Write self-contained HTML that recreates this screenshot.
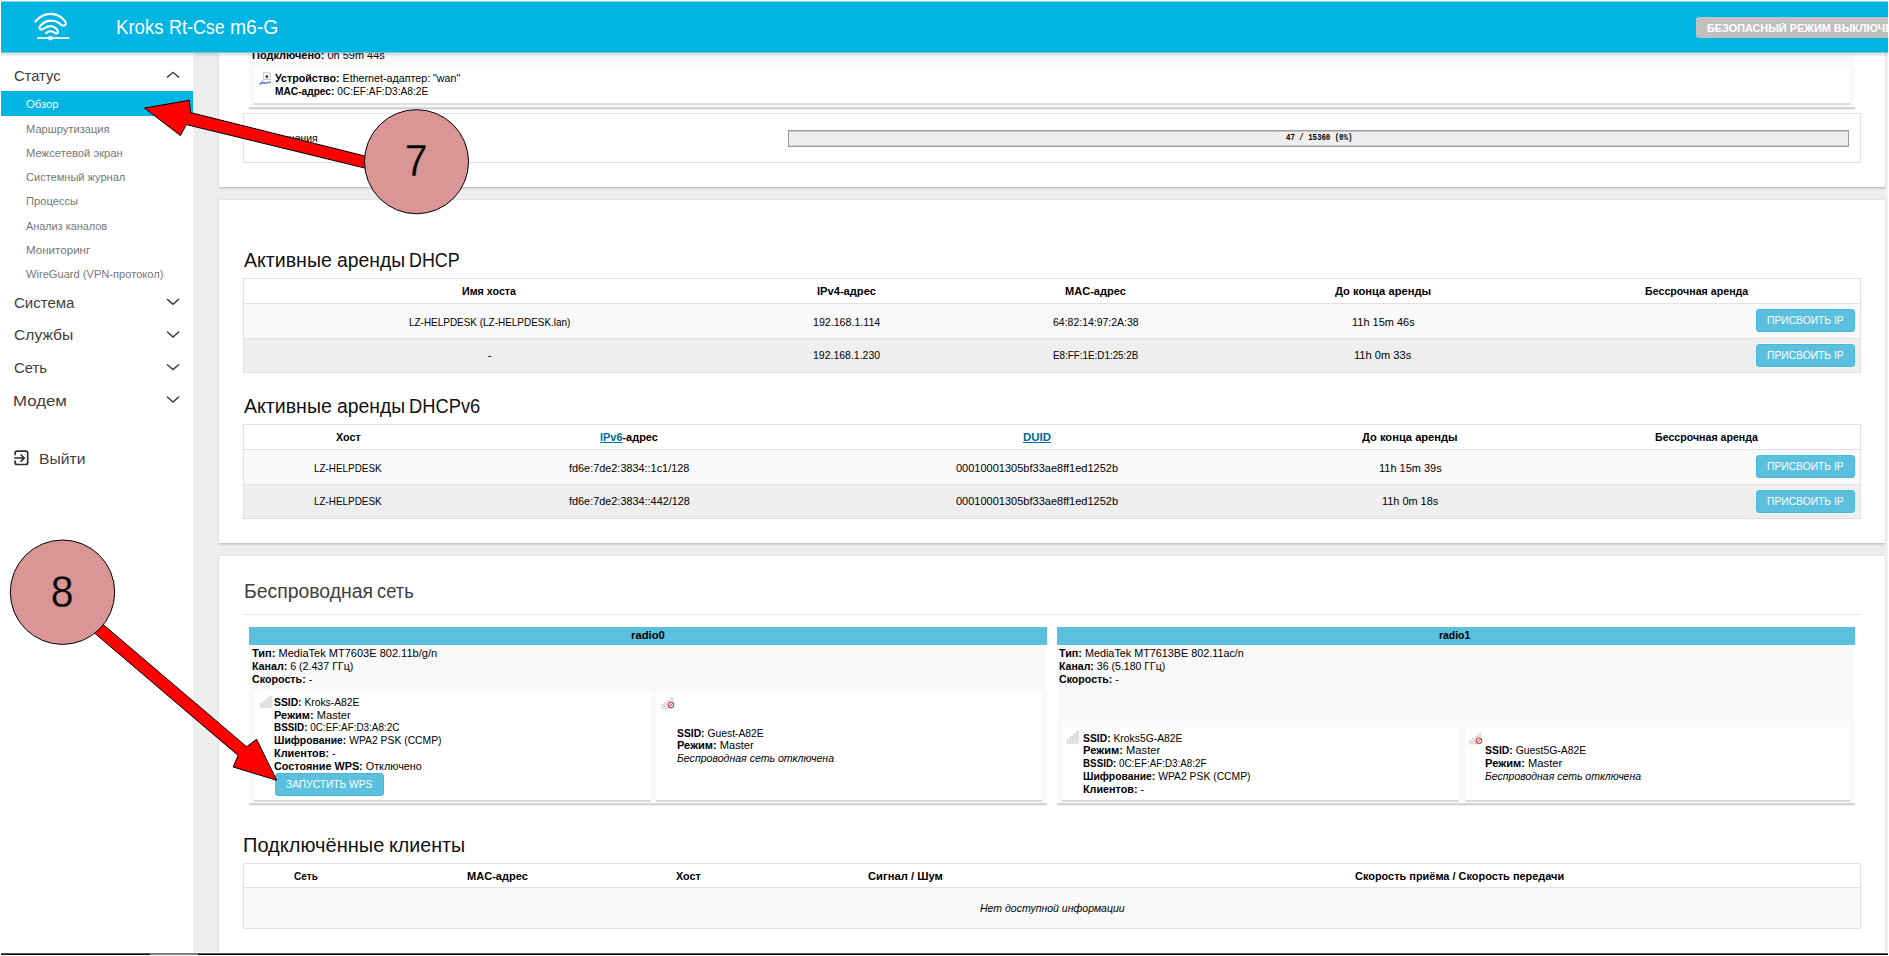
<!DOCTYPE html>
<html lang="ru">
<head>
<meta charset="utf-8">
<title>Kroks Rt-Cse m6-G</title>
<style>
html,body{margin:0;padding:0}
html{width:1889px;height:956px;overflow:hidden;background:#fff}
body{position:relative;width:1889px;height:956px;overflow:hidden;background:#fff;font-family:"Liberation Sans",sans-serif;color:#000}
.b{position:absolute;box-sizing:border-box}
.t{position:absolute;white-space:nowrap;line-height:1;transform-origin:0 0;color:#000}
.t a{color:#0069a0;text-decoration:underline}
svg{position:absolute;overflow:visible}
#hdr{position:absolute;left:1px;top:1px;width:1887px;height:51px;background:#00b5e2;box-shadow:inset 0 1px 0 #7fd9f0,inset 0 2px 0 #00ade0;z-index:5;overflow:hidden}
#hsh{position:absolute;left:1px;top:52px;width:1887px;height:5px;z-index:5;background:linear-gradient(to bottom,#6ec3dc 0,#6ec3dc 1px,rgba(40,0,0,.10) 1px,rgba(40,0,0,.10) 2px,rgba(0,0,0,.11) 2px,rgba(0,0,0,.11) 3px,rgba(0,0,0,.06) 3px,rgba(0,0,0,.06) 4px,rgba(0,0,0,.025) 4px,rgba(0,0,0,.025) 5px)}
#safe{position:absolute;left:1695px;top:16px;width:260px;height:21px;border-radius:3px;background:#c0c0c0}
#ann{left:0;top:0;z-index:20}
</style>
</head>
<body>
<div id="hdr"><div id="safe"></div></div>
<div id="hsh"></div>
<div class="b" style="left:1px;top:52px;width:192px;height:900px;background:#fff"></div>
<div class="b" style="left:193px;top:52px;width:1695px;height:900px;background:#ededed"></div>
<div class="b" style="left:1886px;top:52px;width:2px;height:900px;background:#f2f2f2"></div>
<div class="b" style="left:1px;top:91px;width:192px;height:25px;background:#00b5e2"></div>
<div class="b" style="left:219px;top:40px;width:1666px;height:147px;background:#fff;box-shadow:0 1px 0 #c9c9c9,0 2px 0 #d6d6d6,0 3px 0 #e9e9e9,0 0 0 1px #e3e3e3"></div>
<div class="b" style="left:249px;top:40px;width:1606px;height:67px;background:#f9f9f9;box-shadow:0 1px 0 #d8d8d8,0 2px 0 #d0d0d0,0 3px 0 #f0f0f0"></div>
<div class="b" style="left:254px;top:67px;width:1596px;height:36px;background:#fff;box-shadow:0 1px 0 #dbdbdb,0 2px 0 #dfdfdf"></div>
<div class="b" style="left:243px;top:113px;width:1618px;height:50px;background:#fff;border:1px solid #e2e2e2"></div>
<div class="b" style="left:788px;top:130px;width:1061px;height:17px;background:#eee;border:1px solid #9c9c9c;box-shadow:inset 0 1px 0 #c4c4c4,inset 0 -1px 0 #cfcfcf"></div>
<div class="b" style="left:219px;top:200px;width:1666px;height:343px;background:#fff;box-shadow:0 1px 0 #c9c9c9,0 2px 0 #d6d6d6,0 3px 0 #e9e9e9,0 0 0 1px #e3e3e3"></div>
<div class="b" style="left:243px;top:278px;width:1618px;height:95px;background:#fff;border:1px solid #e2e2e2"></div>
<div class="b" style="left:244px;top:303px;width:1616px;height:35px;background:#f9f9f9;border-top:1px solid #e2e2e2"></div>
<div class="b" style="left:244px;top:338px;width:1616px;height:34px;background:#eee;border-top:1px solid #e2e2e2"></div>
<div class="b" style="left:243px;top:424px;width:1618px;height:95px;background:#fff;border:1px solid #e2e2e2"></div>
<div class="b" style="left:244px;top:449px;width:1616px;height:35px;background:#f9f9f9;border-top:1px solid #e2e2e2"></div>
<div class="b" style="left:244px;top:484px;width:1616px;height:34px;background:#eee;border-top:1px solid #e2e2e2"></div>
<div class="b" style="left:1756.2px;top:309.3px;width:98.8px;height:22.6px;background:#5bc0de;border-radius:3px;border:1px solid #46b8da;box-shadow:0 0 0 1px rgba(255,255,255,.55)"></div>
<div class="b" style="left:1756.2px;top:344.1px;width:98.8px;height:22.6px;background:#5bc0de;border-radius:3px;border:1px solid #46b8da;box-shadow:0 0 0 1px rgba(255,255,255,.55)"></div>
<div class="b" style="left:1756.2px;top:454.9px;width:98.8px;height:23.1px;background:#5bc0de;border-radius:3px;border:1px solid #46b8da;box-shadow:0 0 0 1px rgba(255,255,255,.55)"></div>
<div class="b" style="left:1756.2px;top:490px;width:98.8px;height:22.8px;background:#5bc0de;border-radius:3px;border:1px solid #46b8da;box-shadow:0 0 0 1px rgba(255,255,255,.55)"></div>
<div class="b" style="left:219px;top:556px;width:1666px;height:396px;background:#fff;box-shadow:0 1px 0 #c9c9c9,0 2px 0 #d6d6d6,0 3px 0 #e9e9e9,0 0 0 1px #e3e3e3"></div>
<div class="b" style="left:243px;top:614px;width:1618px;height:1px;background:#e9e9e9"></div>
<div class="b" style="left:249px;top:627px;width:798px;height:176px;background:#f9f9f9;box-shadow:0 1px 0 #d8d8d8,0 2px 0 #d0d0d0,0 3px 0 #f0f0f0"></div>
<div class="b" style="left:249px;top:627px;width:798px;height:18px;background:#5bc0de"></div>
<div class="b" style="left:254px;top:691px;width:397px;height:109px;background:#fff;box-shadow:0 1px 0 #dbdbdb,0 2px 0 #dfdfdf"></div>
<div class="b" style="left:656px;top:691px;width:386px;height:109px;background:#fff;box-shadow:0 1px 0 #dbdbdb,0 2px 0 #dfdfdf"></div>
<div class="b" style="left:275px;top:773px;width:108.5px;height:22.5px;background:#5bc0de;border-radius:3px;border:1px solid #46b8da;box-shadow:0 0 0 1px rgba(255,255,255,.55)"></div>
<div class="b" style="left:1057px;top:627px;width:798px;height:176px;background:#f9f9f9;box-shadow:0 1px 0 #d8d8d8,0 2px 0 #d0d0d0,0 3px 0 #f0f0f0"></div>
<div class="b" style="left:1057px;top:627px;width:798px;height:18px;background:#5bc0de"></div>
<div class="b" style="left:1062px;top:727px;width:397px;height:73px;background:#fff;box-shadow:0 1px 0 #dbdbdb,0 2px 0 #dfdfdf"></div>
<div class="b" style="left:1465px;top:727px;width:385px;height:73px;background:#fff;box-shadow:0 1px 0 #dbdbdb,0 2px 0 #dfdfdf"></div>
<div class="b" style="left:243px;top:863px;width:1618px;height:66px;background:#fff;border:1px solid #e2e2e2"></div>
<div class="b" style="left:244px;top:887px;width:1616px;height:41px;background:#f9f9f9;border-top:1px solid #e2e2e2"></div>
<svg class="b" width="1889" height="956" viewBox="0 0 1889 956" style="left:0;top:0;z-index:3"><polyline points="167.4,77.1 173,72.3 178.6,77.1" fill="none" stroke="#3a3a3a" stroke-width="1.4" stroke-linecap="round" stroke-linejoin="miter"/><polyline points="167.4,299.4 173,304.3 178.6,299.4" fill="none" stroke="#3a3a3a" stroke-width="1.4" stroke-linecap="round" stroke-linejoin="miter"/><polyline points="167.4,332 173,337.1 178.6,332" fill="none" stroke="#3a3a3a" stroke-width="1.4" stroke-linecap="round" stroke-linejoin="miter"/><polyline points="167.4,364.7 173,369.6 178.6,364.7" fill="none" stroke="#3a3a3a" stroke-width="1.4" stroke-linecap="round" stroke-linejoin="miter"/><polyline points="167.4,396.9 173,402 178.6,396.9" fill="none" stroke="#3a3a3a" stroke-width="1.4" stroke-linecap="round" stroke-linejoin="miter"/><path d="M15.1 455.3 V453.1 a2 2 0 0 1 2 -2 H25.7 a2 2 0 0 1 2 2 V462.5 a2 2 0 0 1 -2 2 H17.1 a2 2 0 0 1 -2 -2 V460.5" fill="none" stroke="#303030" stroke-width="1.7"/><path d="M14.2 458 H23.6 M20.6 454.5 L24.2 458 L20.6 461.6" fill="none" stroke="#303030" stroke-width="1.7"/><rect x="263.4" y="72.7" width="6.9" height="6.8" fill="#fcfcfc" stroke="#c9c9c9" stroke-width="1"/><circle cx="266.8" cy="76.4" r="1.5" fill="#4a4a30"/><path d="M261.6 81 L265.2 79" fill="none" stroke="#cfcfcf" stroke-width="1.6"/><path d="M260.2 84 C262 81.2 263.6 83.6 265.6 83 C267.4 82.4 268.6 82.6 270.2 82.2" fill="none" stroke="#5a86c8" stroke-width="1.7" stroke-linecap="round"/><rect x="260.1" y="703.3" width="2.5" height="4.4" fill="#e6e6e4" stroke="#cdcdcb" stroke-width="0.5"/><rect x="263.1" y="700.9" width="2.5" height="6.8" fill="#e6e6e4" stroke="#cdcdcb" stroke-width="0.5"/><rect x="266.1" y="698.3" width="2.5" height="9.4" fill="#e6e6e4" stroke="#cdcdcb" stroke-width="0.5"/><rect x="269.1" y="696" width="2.5" height="11.7" fill="#e6e6e4" stroke="#cdcdcb" stroke-width="0.5"/><rect x="1067.3" y="738.8" width="2.5" height="4.4" fill="#e6e6e4" stroke="#cdcdcb" stroke-width="0.5"/><rect x="1070.3" y="736.4" width="2.5" height="6.8" fill="#e6e6e4" stroke="#cdcdcb" stroke-width="0.5"/><rect x="1073.3" y="733.8" width="2.5" height="9.4" fill="#e6e6e4" stroke="#cdcdcb" stroke-width="0.5"/><rect x="1076.3" y="731.5" width="2.5" height="11.7" fill="#e6e6e4" stroke="#cdcdcb" stroke-width="0.5"/><rect x="661.6" y="704.7" width="2.5" height="3.6" fill="#e6e6e4" stroke="#cdcdcb" stroke-width="0.5"/><rect x="664.6" y="702.7" width="2.5" height="5.6" fill="#e6e6e4" stroke="#cdcdcb" stroke-width="0.5"/><rect x="667.6" y="700.3" width="2.5" height="8" fill="#e6e6e4" stroke="#cdcdcb" stroke-width="0.5"/><rect x="670.6" y="697.9" width="2.5" height="10.4" fill="#e6e6e4" stroke="#cdcdcb" stroke-width="0.5"/><circle cx="671" cy="705" r="2.7" fill="#fff" fill-opacity="0.6" stroke="#d2484d" stroke-width="1.05"/><line x1="669.2" y1="706.6" x2="672.8" y2="703.4" stroke="#d2484d" stroke-width="1"/><rect x="1469.6" y="740.4" width="2.5" height="3.6" fill="#e6e6e4" stroke="#cdcdcb" stroke-width="0.5"/><rect x="1472.6" y="738.4" width="2.5" height="5.6" fill="#e6e6e4" stroke="#cdcdcb" stroke-width="0.5"/><rect x="1475.6" y="736" width="2.5" height="8" fill="#e6e6e4" stroke="#cdcdcb" stroke-width="0.5"/><rect x="1478.6" y="733.6" width="2.5" height="10.4" fill="#e6e6e4" stroke="#cdcdcb" stroke-width="0.5"/><circle cx="1479" cy="740.7" r="2.7" fill="#fff" fill-opacity="0.6" stroke="#d2484d" stroke-width="1.05"/><line x1="1477.2" y1="742.3" x2="1480.8" y2="739.1" stroke="#d2484d" stroke-width="1"/></svg>
<span class="t" id="t0" style="left:13.75px;top:68px;font-size:15.5px;color:#404040;transform:scaleX(0.9487)">Статус</span>
<span class="t" id="t1" style="left:25.95px;top:98px;font-size:11.6px;color:#fff;transform:scaleX(0.9696)">Обзор</span>
<span class="t" id="t2" style="left:25.95px;top:123px;font-size:11.6px;color:#767676;transform:scaleX(0.9596)">Маршрутизация</span>
<span class="t" id="t3" style="left:25.95px;top:147px;font-size:11.6px;color:#767676;transform:scaleX(0.9696)">Межсетевой экран</span>
<span class="t" id="t4" style="left:25.95px;top:171px;font-size:11.6px;color:#767676;transform:scaleX(0.9517)">Системный журнал</span>
<span class="t" id="t5" style="left:25.95px;top:195px;font-size:11.6px;color:#767676;transform:scaleX(0.9628)">Процессы</span>
<span class="t" id="t6" style="left:25.95px;top:220px;font-size:11.6px;color:#767676;transform:scaleX(0.9364)">Анализ каналов</span>
<span class="t" id="t7" style="left:25.95px;top:244px;font-size:11.6px;color:#767676">Мониторинг</span>
<span class="t" id="t8" style="left:25.95px;top:268px;font-size:11.6px;color:#767676;transform:scaleX(0.9582)">WireGuard (VPN-протокол)</span>
<span class="t" id="t9" style="left:13.75px;top:295px;font-size:15.5px;color:#404040;transform:scaleX(0.9681)">Система</span>
<span class="t" id="t10" style="left:13.75px;top:327px;font-size:15.5px;color:#404040;transform:scaleX(1.0089)">Службы</span>
<span class="t" id="t11" style="left:13.75px;top:360px;font-size:15.5px;color:#404040;transform:scaleX(0.9556)">Сеть</span>
<span class="t" id="t12" style="left:12.75px;top:393px;font-size:15.5px;color:#404040;transform:scaleX(1.0844)">Модем</span>
<span class="t" id="t13" style="left:38.75px;top:451px;font-size:15.5px;color:#404040;transform:scaleX(1.0118)">Выйти</span>
<span class="t" id="t14" style="left:115.75px;top:17px;font-size:20.2px;color:#fff;z-index:6;transform:scaleX(0.9207)">Kroks</span>
<span class="t" id="t15" style="left:168.75px;top:17px;font-size:20.2px;color:#fff;z-index:6;transform:scaleX(0.8879)">Rt-Cse</span>
<span class="t" id="t16" style="left:229.55px;top:17px;font-size:20.2px;color:#fff;z-index:6;transform:scaleX(0.9587)">m6-G</span>
<span class="t" id="t17" style="left:1706.75px;top:23px;font-size:10.6px;color:#fff;font-weight:bold;z-index:6;overflow:hidden;width:176.83px;transform:scaleX(1.0250)">БЕЗОПАСНЫЙ РЕЖИМ ВЫКЛЮЧЕН</span>
<span class="t" id="t18" style="left:251.55px;top:49px;font-size:11.6px;transform:scaleX(0.9463)"><b>Подключено:</b> 0h 59m 44s</span>
<span class="t" id="t19" style="left:274.75px;top:72px;font-size:11.6px;transform:scaleX(0.9227)"><b>Устройство:</b> Ethernet-адаптер: "wan"</span>
<span class="t" id="t20" style="left:274.75px;top:85px;font-size:11.6px;transform:scaleX(0.8768)"><b>MAC-адрес:</b> 0C:EF:AF:D3:A8:2E</span>
<span class="t" id="t21" style="left:257.75px;top:132px;font-size:11.6px;transform:scaleX(0.9009)">Соединения</span>
<span class="t" id="t22" style="left:1285.55px;top:134px;font-size:8.5px;font-weight:bold;font-family:'Liberation Mono', monospace;transform:scaleX(0.8677)">47 / 15360 (0%)</span>
<span class="t" id="t23" style="left:243.95px;top:251px;font-size:19.9px;color:#111;transform:scaleX(0.9831)">Активные</span>
<span class="t" id="t24" style="left:336.75px;top:251px;font-size:19.9px;color:#111;transform:scaleX(0.9709)">аренды</span>
<span class="t" id="t25" style="left:408.95px;top:251px;font-size:19.9px;color:#111;transform:scaleX(0.8992)">DHCP</span>
<span class="t" id="t26" style="left:243.95px;top:397px;font-size:19.9px;color:#111;transform:scaleX(0.9831)">Активные</span>
<span class="t" id="t27" style="left:336.75px;top:397px;font-size:19.9px;color:#111;transform:scaleX(0.9709)">аренды</span>
<span class="t" id="t28" style="left:408.95px;top:397px;font-size:19.9px;color:#111;transform:scaleX(0.9206)">DHCPv6</span>
<span class="t" id="t29" style="left:462.15px;top:285px;font-size:11.6px;font-weight:bold;transform:scaleX(0.9232)">Имя хоста</span>
<span class="t" id="t30" style="left:817.35px;top:285px;font-size:11.6px;font-weight:bold;transform:scaleX(0.9596)">IPv4-адрес</span>
<span class="t" id="t31" style="left:1064.95px;top:285px;font-size:11.6px;font-weight:bold;transform:scaleX(0.9524)">MAC-адрес</span>
<span class="t" id="t32" style="left:1334.55px;top:285px;font-size:11.6px;font-weight:bold;transform:scaleX(0.9649)">До конца аренды</span>
<span class="t" id="t33" style="left:1644.55px;top:285px;font-size:11.6px;font-weight:bold;transform:scaleX(0.9194)">Бессрочная аренда</span>
<span class="t" id="t34" style="left:409.15px;top:316px;font-size:11.6px;transform:scaleX(0.8580)">LZ-HELPDESK (LZ-HELPDESK.lan)</span>
<span class="t" id="t35" style="left:812.75px;top:316px;font-size:11.6px;transform:scaleX(0.9174)">192.168.1.114</span>
<span class="t" id="t36" style="left:1052.55px;top:316px;font-size:11.6px;transform:scaleX(0.9038)">64:82:14:97:2A:38</span>
<span class="t" id="t37" style="left:1351.75px;top:316px;font-size:11.6px;transform:scaleX(0.9467)">11h 15m 46s</span>
<span class="t" id="t38" style="left:487.75px;top:349px;font-size:11.6px">-</span>
<span class="t" id="t39" style="left:812.75px;top:349px;font-size:11.6px;transform:scaleX(0.9049)">192.168.1.230</span>
<span class="t" id="t40" style="left:1052.55px;top:349px;font-size:11.6px;transform:scaleX(0.8493)">E8:FF:1E:D1:25:2B</span>
<span class="t" id="t41" style="left:1353.95px;top:349px;font-size:11.6px;transform:scaleX(0.9576)">11h 0m 33s</span>
<span class="t" id="t42" style="left:335.75px;top:431px;font-size:11.6px;font-weight:bold;transform:scaleX(0.9255)">Хост</span>
<span class="t" id="t43" style="left:600.15px;top:431px;font-size:11.6px;font-weight:bold;transform:scaleX(0.9424)"><a>IPv6</a>-адрес</span>
<span class="t" id="t44" style="left:1023.15px;top:431px;font-size:11.6px;font-weight:bold;transform:scaleX(0.9830)"><a>DUID</a></span>
<span class="t" id="t45" style="left:1362.35px;top:431px;font-size:11.6px;font-weight:bold;transform:scaleX(0.9595)">До конца аренды</span>
<span class="t" id="t46" style="left:1654.75px;top:431px;font-size:11.6px;font-weight:bold;transform:scaleX(0.9156)">Бессрочная аренда</span>
<span class="t" id="t47" style="left:313.95px;top:462px;font-size:11.6px;transform:scaleX(0.8536)">LZ-HELPDESK</span>
<span class="t" id="t48" style="left:569.35px;top:462px;font-size:11.6px;transform:scaleX(0.9378)">fd6e:7de2:3834::1c1/128</span>
<span class="t" id="t49" style="left:956.15px;top:462px;font-size:11.6px;transform:scaleX(0.9499)">00010001305bf33ae8ff1ed1252b</span>
<span class="t" id="t50" style="left:1379.15px;top:462px;font-size:11.6px;transform:scaleX(0.9467)">11h 15m 39s</span>
<span class="t" id="t51" style="left:313.95px;top:495px;font-size:11.6px;transform:scaleX(0.8536)">LZ-HELPDESK</span>
<span class="t" id="t52" style="left:568.55px;top:495px;font-size:11.6px;transform:scaleX(0.9377)">fd6e:7de2:3834::442/128</span>
<span class="t" id="t53" style="left:956.15px;top:495px;font-size:11.6px;transform:scaleX(0.9499)">00010001305bf33ae8ff1ed1252b</span>
<span class="t" id="t54" style="left:1382.15px;top:495px;font-size:11.6px;transform:scaleX(0.9413)">11h 0m 18s</span>
<span class="t" id="t55" style="left:1767.35px;top:316px;font-size:10.1px;color:#fff;transform:scaleX(1.0202)">ПРИСВОИТЬ IP</span>
<span class="t" id="t56" style="left:1767.35px;top:351px;font-size:10.1px;color:#fff;transform:scaleX(1.0202)">ПРИСВОИТЬ IP</span>
<span class="t" id="t57" style="left:1767.35px;top:462px;font-size:10.1px;color:#fff;transform:scaleX(1.0202)">ПРИСВОИТЬ IP</span>
<span class="t" id="t58" style="left:1767.35px;top:497px;font-size:10.1px;color:#fff;transform:scaleX(1.0202)">ПРИСВОИТЬ IP</span>
<span class="t" id="t59" style="left:243.75px;top:582px;font-size:19.9px;color:#404040;transform:scaleX(0.9751)">Беспроводная</span>
<span class="t" id="t60" style="left:377.35px;top:582px;font-size:19.9px;color:#404040;transform:scaleX(0.9230)">сеть</span>
<span class="t" id="t61" style="left:630.55px;top:629px;font-size:11.6px;font-weight:bold;transform:scaleX(0.9707)">radio0</span>
<span class="t" id="t62" style="left:251.55px;top:647px;font-size:11.6px;transform:scaleX(0.9512)"><b>Тип:</b> MediaTek MT7603E 802.11b/g/n</span>
<span class="t" id="t63" style="left:251.55px;top:660px;font-size:11.6px;transform:scaleX(0.9178)"><b>Канал:</b> 6 (2.437 ГГц)</span>
<span class="t" id="t64" style="left:251.55px;top:673px;font-size:11.6px;transform:scaleX(0.9225)"><b>Скорость:</b> -</span>
<span class="t" id="t65" style="left:274.15px;top:696px;font-size:11.6px;transform:scaleX(0.8901)"><b>SSID:</b> Kroks-A82E</span>
<span class="t" id="t66" style="left:274.15px;top:709px;font-size:11.6px;transform:scaleX(0.9561)"><b>Режим:</b> Master</span>
<span class="t" id="t67" style="left:274.15px;top:721px;font-size:11.6px;transform:scaleX(0.8533)"><b>BSSID:</b> 0C:EF:AF:D3:A8:2C</span>
<span class="t" id="t68" style="left:274.15px;top:734px;font-size:11.6px;transform:scaleX(0.8928)"><b>Шифрование:</b> WPA2 PSK (CCMP)</span>
<span class="t" id="t69" style="left:274.15px;top:747px;font-size:11.6px;transform:scaleX(0.9391)"><b>Клиентов:</b> -</span>
<span class="t" id="t70" style="left:274.15px;top:760px;font-size:11.6px;transform:scaleX(0.9334)"><b>Состояние WPS:</b> Отключено</span>
<span class="t" id="t71" style="left:285.75px;top:780px;font-size:10.1px;color:#fff;transform:scaleX(1.0119)">ЗАПУСТИТЬ WPS</span>
<span class="t" id="t72" style="left:676.75px;top:727px;font-size:11.6px;transform:scaleX(0.8913)"><b>SSID:</b> Guest-A82E</span>
<span class="t" id="t73" style="left:676.75px;top:739px;font-size:11.6px;transform:scaleX(0.9561)"><b>Режим:</b> Master</span>
<span class="t" id="t74" style="left:676.75px;top:752px;font-size:11.6px;font-style:italic;transform:scaleX(0.9102)">Беспроводная сеть отключена</span>
<span class="t" id="t75" style="left:1438.95px;top:629px;font-size:11.6px;font-weight:bold;transform:scaleX(0.8991)">radio1</span>
<span class="t" id="t76" style="left:1059.35px;top:647px;font-size:11.6px;transform:scaleX(0.9317)"><b>Тип:</b> MediaTek MT7613BE 802.11ac/n</span>
<span class="t" id="t77" style="left:1059.35px;top:660px;font-size:11.6px;transform:scaleX(0.9099)"><b>Канал:</b> 36 (5.180 ГГц)</span>
<span class="t" id="t78" style="left:1059.35px;top:673px;font-size:11.6px;transform:scaleX(0.9149)"><b>Скорость:</b> -</span>
<span class="t" id="t79" style="left:1082.95px;top:732px;font-size:11.6px;transform:scaleX(0.8924)"><b>SSID:</b> Kroks5G-A82E</span>
<span class="t" id="t80" style="left:1082.95px;top:744px;font-size:11.6px;transform:scaleX(0.9623)"><b>Режим:</b> Master</span>
<span class="t" id="t81" style="left:1082.95px;top:757px;font-size:11.6px;transform:scaleX(0.8478)"><b>BSSID:</b> 0C:EF:AF:D3:A8:2F</span>
<span class="t" id="t82" style="left:1082.95px;top:770px;font-size:11.6px;transform:scaleX(0.8928)"><b>Шифрование:</b> WPA2 PSK (CCMP)</span>
<span class="t" id="t83" style="left:1082.95px;top:783px;font-size:11.6px;transform:scaleX(0.9304)"><b>Клиентов:</b> -</span>
<span class="t" id="t84" style="left:1484.75px;top:744px;font-size:11.6px;transform:scaleX(0.8978)"><b>SSID:</b> Guest5G-A82E</span>
<span class="t" id="t85" style="left:1484.75px;top:757px;font-size:11.6px;transform:scaleX(0.9623)"><b>Режим:</b> Master</span>
<span class="t" id="t86" style="left:1484.75px;top:770px;font-size:11.6px;font-style:italic;transform:scaleX(0.9044)">Беспроводная сеть отключена</span>
<span class="t" id="t87" style="left:243.35px;top:836px;font-size:19.9px;color:#111;transform:scaleX(1.0073)">Подключённые</span>
<span class="t" id="t88" style="left:388.95px;top:836px;font-size:19.9px;color:#111;transform:scaleX(0.9869)">клиенты</span>
<span class="t" id="t89" style="left:294.35px;top:870px;font-size:11.6px;font-weight:bold;transform:scaleX(0.8681)">Сеть</span>
<span class="t" id="t90" style="left:466.95px;top:870px;font-size:11.6px;font-weight:bold;transform:scaleX(0.9529)">MAC-адрес</span>
<span class="t" id="t91" style="left:676.15px;top:870px;font-size:11.6px;font-weight:bold;transform:scaleX(0.9255)">Хост</span>
<span class="t" id="t92" style="left:868.15px;top:870px;font-size:11.6px;font-weight:bold;transform:scaleX(0.9674)">Сигнал / Шум</span>
<span class="t" id="t93" style="left:1355.15px;top:870px;font-size:11.6px;font-weight:bold;transform:scaleX(0.9433)">Скорость приёма / Скорость передачи</span>
<span class="t" id="t94" style="left:979.75px;top:902px;font-size:11.6px;font-style:italic;transform:scaleX(0.9060)">Нет доступной информации</span>
<svg class="b" width="1889" height="60" viewBox="0 0 1889 60" style="left:0;top:0;z-index:7"><g fill="none" stroke="#fff" stroke-width="2.1" stroke-linecap="round" stroke-linejoin="round"><path d="M35.3 21.5 C39.5 16.8 44.8 13.9 50.5 13.9 C56.3 13.9 61.8 17 65.2 21.4 C66.8 23.6 65.4 26 63.2 25.7 C61.8 25.5 60.5 24.2 59.2 23.2 C56.8 21.4 54 20.6 51.2 20.6 C47 20.6 42.8 22.8 40 26.2 C38.6 28 40 29.8 41.9 29.5 C43 29.3 44 28.4 45 27.8 C46.6 26.7 48.4 26.1 50.2 26.1 C53.2 26.1 56 27.8 57.6 30.4 C58.6 32.2 57.6 33.6 56.2 33.5 C55.2 33.4 54.4 32.6 53.6 32.1 C52.7 31.5 51.6 31.2 50.5 31.2 C48.8 31.2 47.2 32 46.1 33.2"/><path d="M37.6 38.1 H68.6" stroke-width="1.8"/></g><circle cx="50.5" cy="38.1" r="2.4" fill="#fff"/></svg>
<svg id="ann" class="b" width="1889" height="956" viewBox="0 0 1889 956"><polygon points="144.4,108.05 189.3,100.3 190.6,112.6 370,157.3 367,168.6 186.4,124.6 180.4,135.6" fill="#ff0000" stroke="#000" stroke-width="1"/><polygon points="276.7,780.3 256.6,739.3 246.6,746.7 100,621.8 91.6,630.6 238.1,755.4 233.2,767" fill="#ff0000" stroke="#000" stroke-width="1"/><circle cx="416.5" cy="161.7" r="52.05" fill="#d99694" stroke="#000" stroke-width="1"/><circle cx="62.5" cy="592.2" r="52.2" fill="#d99694" stroke="#000" stroke-width="1"/><text x="416.2" y="176" font-family="Liberation Sans, sans-serif" font-size="43.6" text-anchor="middle" fill="#000" stroke="#d99694" stroke-width="0.35" textLength="22.8" lengthAdjust="spacingAndGlyphs">7</text><text x="62.1" y="607.2" font-family="Liberation Sans, sans-serif" font-size="43.6" text-anchor="middle" fill="#000" stroke="#d99694" stroke-width="0.35" textLength="22.8" lengthAdjust="spacingAndGlyphs">8</text><rect x="0" y="952" width="1889" height="4" fill="#fff"/><rect x="1" y="953.3" width="1887" height="1.7" fill="#140c08"/><rect x="150" y="953.3" width="48" height="1.7" fill="#8a8582"/></svg>
</body>
</html>
